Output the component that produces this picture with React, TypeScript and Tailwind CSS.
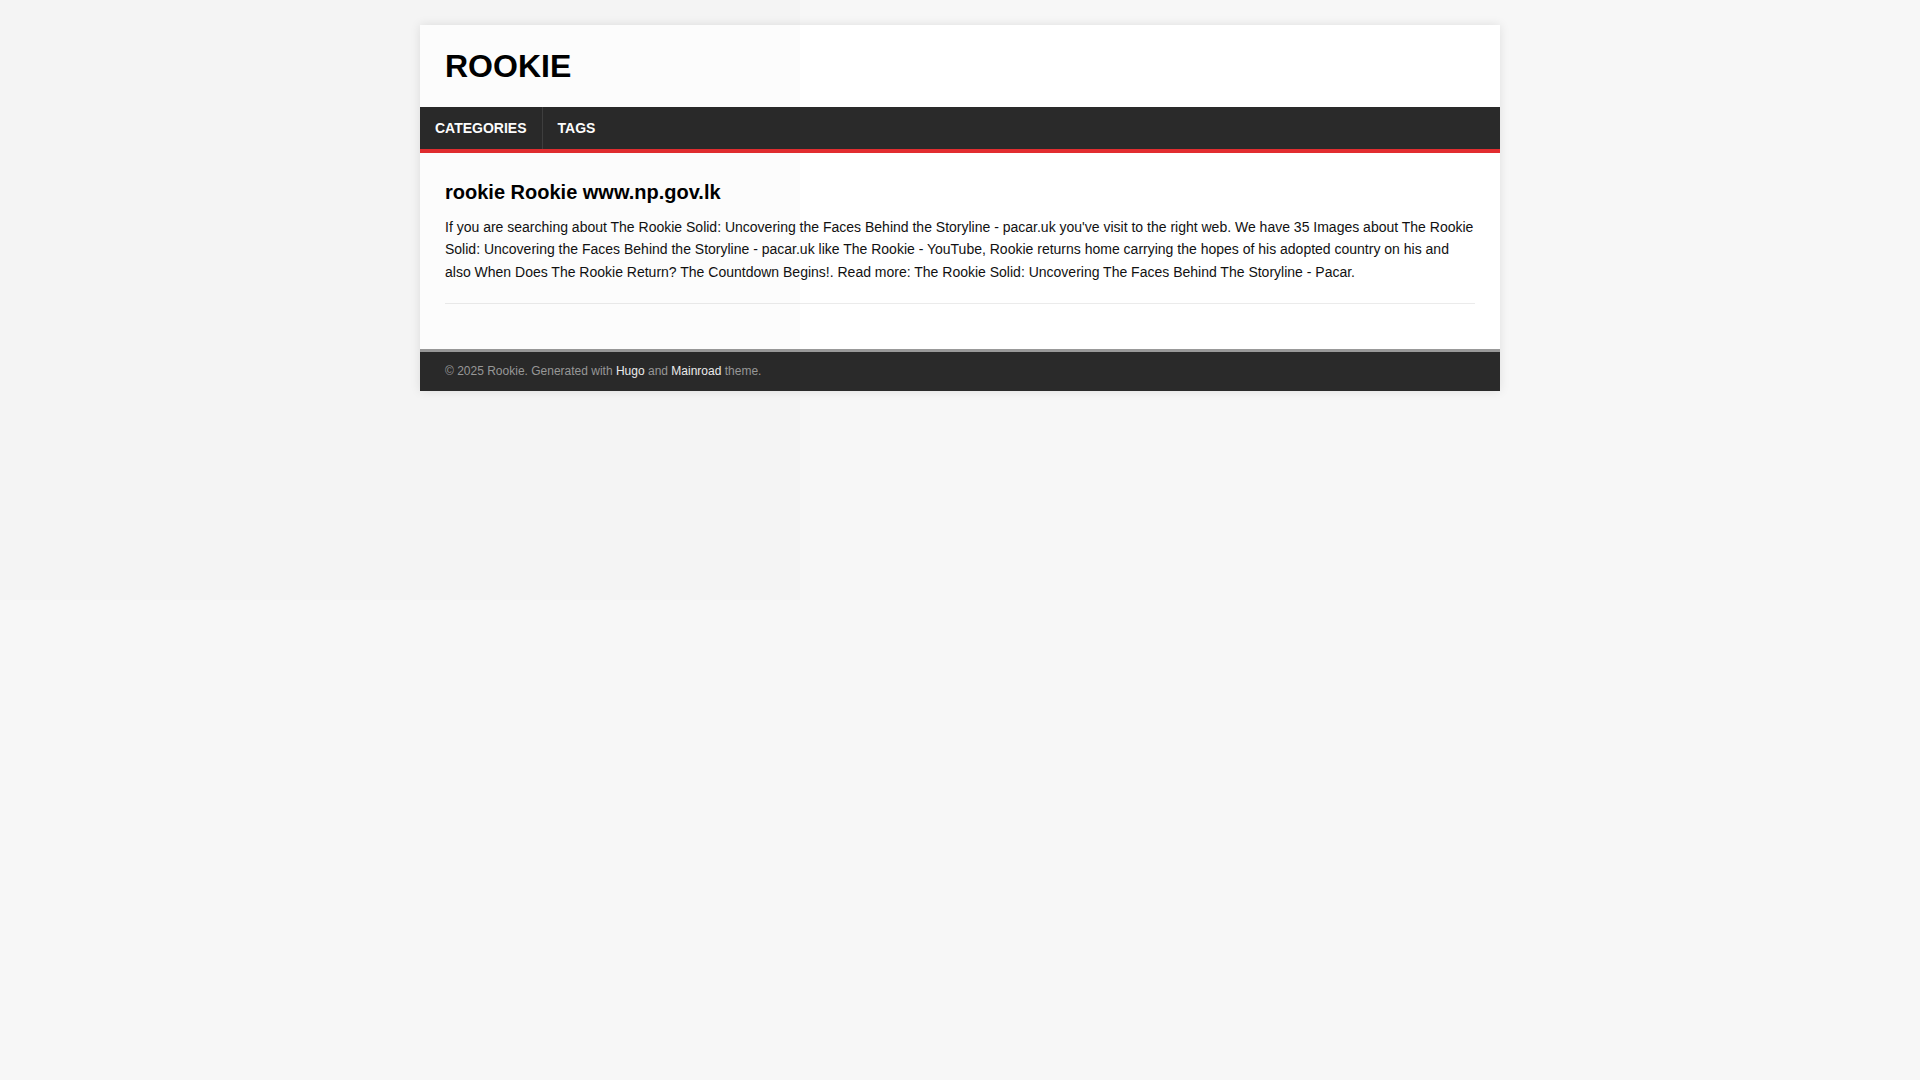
export default function App() {
  return (
    <div
      className="relative min-h-screen bg-[#f7f7f7] pt-[25px] pb-[25px] text-[#000]"
      style={{ fontFamily: '"Liberation Sans", Arial, Helvetica, sans-serif' }}
    >
      {/* faint tinted block in the top-left corner of the capture */}
      <div className="pointer-events-none absolute left-0 top-0 z-10 h-[600px] w-[800px] bg-black/[0.013]" />

      <div className="mx-auto w-[1080px] bg-white shadow-[0_0_10px_rgba(0,0,0,0.1)]">
        {/* Header */}
        <header className="px-[25px] py-[25px]">
          <a className="block text-[32px] font-bold uppercase leading-none text-black">Rookie</a>
        </header>

        {/* Menu */}
        <nav className="border-b-4 border-[#e22d30] bg-[#2a2a2a]">
          <ul className="flex">
            <li>
              <a className="flex h-[42px] items-center px-[15px] text-[14px] font-bold uppercase text-white">
                Categories
              </a>
            </li>
            <li className="border-l border-white/10">
              <a className="flex h-[42px] items-center px-[15px] text-[14px] font-bold uppercase text-white">
                Tags
              </a>
            </li>
          </ul>
        </nav>

        {/* Main */}
        <main className="p-[25px]">
          <article className="mb-[20px] border-b border-[#ebebeb] pb-[20px]">
            <h1 className="mb-[10px] text-[20px] font-bold leading-[28px] text-[#000]">
              rookie Rookie www.np.gov.lk
            </h1>
            <p className="text-[14px] leading-[1.6] text-[#111]">
              If you are searching about The Rookie Solid: Uncovering the Faces Behind the Storyline - pacar.uk
              you've visit to the right web. We have 35 Images about The Rookie Solid: Uncovering the Faces Behind
              the Storyline - pacar.uk like The Rookie - YouTube, Rookie returns home carrying the hopes of his
              adopted country on his and also When Does The Rookie Return? The Countdown Begins!. Read more: The
              Rookie Solid: Uncovering The Faces Behind The Storyline - Pacar.
            </p>
          </article>
        </main>

        {/* Footer */}
        <footer className="border-t-[3px] border-[#999] bg-[#2a2a2a] px-[25px] py-[10px] text-[12px] leading-[1.6] text-[#999]">
          © 2025 Rookie. Generated with <a className="text-[#eee]">Hugo</a> and{' '}
          <a className="text-[#eee]">Mainroad</a> theme.
        </footer>
      </div>
    </div>
  );
}
